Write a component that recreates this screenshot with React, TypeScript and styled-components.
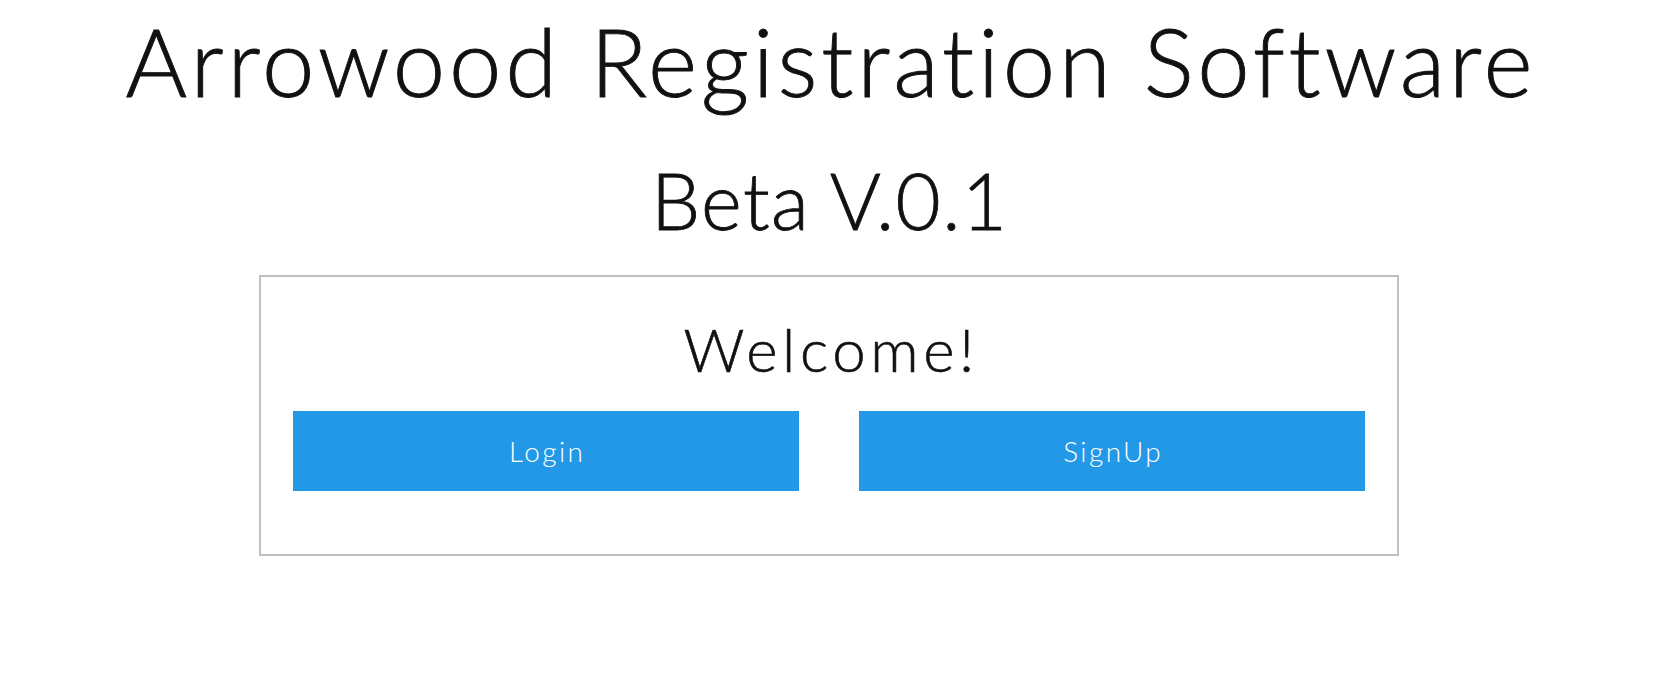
import React from 'react';
import styled, { createGlobalStyle } from 'styled-components';

const GlobalStyle = createGlobalStyle`
	html, body {
		margin: 0;
		padding: 0;
		background: #ffffff;
	}
	body {
		font-family: 'Lato', 'Open Sans', sans-serif;
		font-variant-ligatures: none;
		color: #111111;
	}
`;

const App: React.FC = () => {
	return (
		<>
			<GlobalStyle />
			<Page>
				<Title>Arrowood Registration Software</Title>
				<Version>Beta V.0.1</Version>
				<WelcomeCard>
					<Greeting>Welcome!</Greeting>
					<ButtonRow>
						<ActionButton type="button">Login</ActionButton>
						<ActionButton type="button">SignUp</ActionButton>
					</ButtonRow>
				</WelcomeCard>
			</Page>
		</>
	);
};

//스타일 컴포넌트
const Page = styled.div`
	display: flex;
	flex-direction: column;
	align-items: center;
	padding-top: 5px;
`;

const Title = styled.h1`
	margin: 0;
	padding-left: 3.8px;
	font-size: 94px;
	font-weight: 300;
	line-height: 1.2;
	letter-spacing: 3.8px;
	-webkit-text-stroke: 0.9px #111111;
	white-space: nowrap;
`;

const Version = styled.h2`
	margin: 36px 0 0;
	padding-left: 1.3px;
	font-size: 78px;
	font-weight: 300;
	line-height: 1.2;
	letter-spacing: 1.3px;
	-webkit-text-stroke: 0.8px #111111;
	white-space: nowrap;
`;

const WelcomeCard = styled.div`
	box-sizing: border-box;
	width: 1140px;
	margin-top: 28px;
	padding: 36px 32px 63px;
	border: 2px solid #c0c0c0;
	display: flex;
	flex-direction: column;
	align-items: center;
`;

const Greeting = styled.h3`
	margin: 0;
	padding-left: 4.6px;
	font-size: 60px;
	font-weight: 300;
	line-height: 1.2;
	letter-spacing: 4.6px;
	-webkit-text-stroke: 0.6px #111111;
`;

const ButtonRow = styled.div`
	width: 100%;
	margin-top: 26px;
	display: grid;
	grid-template-columns: 1fr 1fr;
	column-gap: 60px;
`;

const ActionButton = styled.button`
	height: 80px;
	padding: 0 0 0 2.4px;
	border: none;
	border-radius: 0;
	background: #2298e6;
	color: #ffffff;
	font-family: 'Lato', 'Open Sans', sans-serif;
	font-size: 28px;
	font-weight: 300;
	line-height: 1.2;
	letter-spacing: 2.4px;
	cursor: pointer;
`;

export default App;
